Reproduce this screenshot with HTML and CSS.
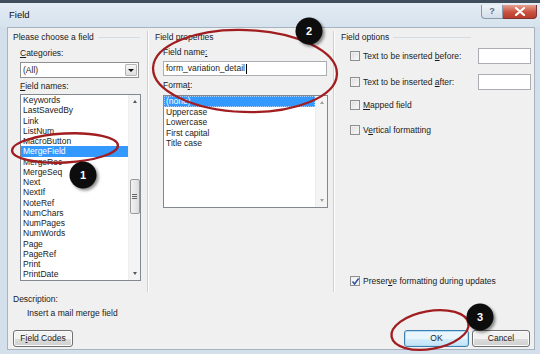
FILE: index.html
```html
<!DOCTYPE html>
<html lang="en">
<head>
  <meta charset="UTF-8" />
  <title>Field</title>
  <link rel="stylesheet" href="styles.css">
</head>
<body>

  <div class="strip"></div>

  <!-- Title bar -->
  <div class="titlebar">
    <span class="title">Field</span>
    <div class="caption-btns">
      <div class="help-btn">?</div>
      <div class="close-btn">
        <svg width="12" height="9" viewBox="0 0 12 9">
          <path d="M2 1 L10 8 M10 1 L2 8" stroke="#fff" stroke-width="2.2" stroke-linecap="round"/>
        </svg>
      </div>
    </div>
  </div>

  <!-- Dialog body -->
  <div class="client">
    <div class="panes">

      <!-- Left pane -->
      <div class="pane pane-left">
        <div class="group-title"><span>Please choose a field</span><i></i></div>
        <div class="group-body">
          <div class="label"><u>C</u>ategories:</div>
          <div class="combo">
            <span>(All)</span>
            <div class="combo-btn"><b></b></div>
          </div>
          <div class="label label-list"><u>F</u>ield names:</div>
          <div class="listbox names">
            <div class="items">
              <div>Keywords</div>
              <div>LastSavedBy</div>
              <div>Link</div>
              <div>ListNum</div>
              <div>MacroButton</div>
              <div class="sel">MergeField</div>
              <div>MergeRec</div>
              <div>MergeSeq</div>
              <div>Next</div>
              <div>NextIf</div>
              <div>NoteRef</div>
              <div>NumChars</div>
              <div>NumPages</div>
              <div>NumWords</div>
              <div>Page</div>
              <div>PageRef</div>
              <div>Print</div>
              <div>PrintDate</div>
            </div>
            <div class="vscroll">
              <span class="arrow up"></span>
              <span class="thumb"><em></em><em></em><em></em></span>
              <span class="arrow down"></span>
            </div>
          </div>
        </div>
      </div>

      <!-- Middle pane -->
      <div class="pane pane-mid">
        <div class="group-title"><span>Field properties</span></div>
        <div class="group-body">
          <div class="label">Field name<u>:</u></div>
          <div class="textbox">form_variation_detail<span class="caret"></span></div>
          <div class="label label-format">Forma<u>t</u>:</div>
          <div class="listbox formats">
            <div class="items">
              <div class="sel focus">(none)</div>
              <div>Uppercase</div>
              <div>Lowercase</div>
              <div>First capital</div>
              <div>Title case</div>
            </div>
            <div class="vscroll off">
              <span class="arrow up"></span>
              <span class="arrow down"></span>
            </div>
          </div>
        </div>
      </div>

      <!-- Right pane -->
      <div class="pane pane-right">
        <div class="group-title"><span>Field options</span><i></i></div>
        <div class="options">
          <div class="opt opt-first">
            <span class="check"></span>
            <span class="opt-text">Text to be inserted <u>b</u>efore:</span>
            <span class="small-input"></span>
          </div>
          <div class="opt opt-second">
            <span class="check"></span>
            <span class="opt-text">Text to be inserted <u>a</u>fter:</span>
            <span class="small-input"></span>
          </div>
          <div class="opt opt-third">
            <span class="check"></span>
            <span class="opt-text"><u>M</u>apped field</span>
          </div>
          <div class="opt opt-fourth">
            <span class="check"></span>
            <span class="opt-text">V<u>e</u>rtical formatting</span>
          </div>
          <div class="opt opt-last">
            <span class="check checked">
              <svg width="9" height="9" viewBox="0 0 9 9">
                <path d="M1.5 4.5 L3.6 7 L7.6 1.5" fill="none" stroke="#2a4f9a" stroke-width="1.4"/>
              </svg>
            </span>
            <span class="opt-text">Preser<u>v</u>e formatting during updates</span>
          </div>
        </div>
      </div>
    </div>

    <!-- Description + buttons -->
    <div class="desc">
      <div class="desc-label">Description:</div>
      <div class="desc-text">Insert a mail merge field</div>
    </div>
    <div class="btn-row">
      <div class="btn codes">F<u>i</u>eld Codes</div>
      <div class="btn ok">OK</div>
      <div class="btn cancel">Cancel</div>
    </div>
  </div>

  <!-- Annotation overlay -->
  <svg class="marks" width="540" height="354" viewBox="0 0 540 354">
    <defs>
      <filter id="shadow" x="-50%" y="-50%" width="200%" height="200%">
        <feDropShadow dx="2" dy="2" stdDeviation="1.6" flood-color="#000" flood-opacity="0.45"/>
      </filter>
    </defs>
    <ellipse cx="65" cy="148" rx="53" ry="14.5" transform="rotate(-3 65 148)" class="ring"/>
    <ellipse cx="245" cy="71" rx="92" ry="41" transform="rotate(2 245 71)" class="ring"/>
    <ellipse cx="430" cy="330" rx="39" ry="19" transform="rotate(-10 430 330)" class="ring"/>

    <g filter="url(#shadow)">
      <circle cx="83" cy="175" r="13.5" class="dot"/>
      <circle cx="309" cy="31" r="13.5" class="dot"/>
      <circle cx="480" cy="317" r="13.5" class="dot"/>
    </g>
    <text x="83" y="179" class="num">1</text>
    <text x="309" y="35" class="num">2</text>
    <text x="480" y="321" class="num">3</text>
  </svg>

</body>
</html>
```

FILE: styles.css
```css
body {
  margin: 0;
  width: 540px;
  height: 354px;
  overflow: hidden;
  position: relative;
  background: #d3dfea;
  font-family: 'Liberation Sans', Arial, sans-serif;
  font-size: 8.5px;
  color: #1b1b1b;
}

u {
  text-decoration: underline;
  text-underline-offset: 1px;
}

.strip {
  height: 3px;
  background: #3f4d5c;
}

/* title bar */
.titlebar {
  height: 24px;
  display: flex;
  justify-content: space-between;
  background: linear-gradient(#e4ecf4, #d6e2ed);
}

.title {
  padding-left: 9px;
  line-height: 24px;
  font-size: 9.5px;
  color: #111;
}

.caption-btns {
  display: flex;
  margin: 2px 3px 0 0;
  height: 14px;
}

.help-btn {
  width: 20px;
  height: 13px;
  border: 1px solid #8a9aac;
  border-top: none;
  border-radius: 0 0 0 4px;
  background: linear-gradient(#eef3f8, #d4dee9);
  color: #5a6a7c;
  font-size: 9px;
  font-weight: bold;
  text-align: center;
  line-height: 13px;
}

.close-btn {
  width: 33px;
  height: 13px;
  border: 1px solid #7a3232;
  border-top: none;
  border-left: none;
  border-radius: 0 0 4px 0;
  background: linear-gradient(#e8a090, #c9503f 55%, #b83b2c);
  display: flex;
  align-items: center;
  justify-content: center;
}

/* dialog body */
.client {
  margin: 0 5px 0 7px;
  height: 321px;
  border: 1px solid #a7b3bf;
  background: #f0f0f0;
}

.panes {
  display: grid;
  grid-template-columns: 140px 186px 1fr;
  margin-top: 3px;
  height: 261px;
}

.pane {
  box-sizing: border-box;
  display: flex;
  flex-direction: column;
}

.pane-left, .pane-mid {
  border-right: 1px solid #cfcfcf;
  box-shadow: 1px 0 0 #fff;
}

.pane-left { padding-left: 5px; }
.pane-mid { padding-left: 7px; }
.pane-right { padding-left: 7px; padding-right: 3px; }

.group-title {
  display: flex;
  align-items: center;
  line-height: 12px;
  height: 12px;
}

.group-title i {
  flex: 1;
  height: 1px;
  background: #d5dde4;
  margin: 1px 7px 0 4px;
}

.pane-right .group-title i {
  margin-right: 60px;
}

.group-body {
  display: flex;
  flex-direction: column;
  align-items: flex-start;
}

.pane-left .group-body { padding-left: 7px; }
.pane-mid .group-body { padding-left: 8px; }

.label {
  line-height: 12px;
  margin-top: 4px;
}

.pane-mid .label { margin-top: 3px; }

.label-list { margin-top: 2px; }
.pane-mid .label-format { margin-top: 3px; }

/* combo box */
.combo {
  margin-top: 3px;
  box-sizing: border-box;
  width: 119px;
  height: 16px;
  border: 1px solid #8e8f8f;
  background: #fff;
  display: flex;
  justify-content: space-between;
}

.combo span {
  padding-left: 2px;
  line-height: 14px;
}

.combo-btn {
  width: 10px;
  margin: 1px;
  border: 1px solid #b5b5b5;
  border-radius: 1px;
  background: linear-gradient(#f6f6f6, #dedede);
  display: flex;
  align-items: center;
  justify-content: center;
}

.combo-btn b {
  border-left: 3px solid transparent;
  border-right: 3px solid transparent;
  border-top: 3px solid #111;
}

/* list boxes */
.listbox {
  margin-top: 2px;
  box-sizing: border-box;
  border: 1px solid #828790;
  background: #fff;
  display: flex;
}

.names {
  width: 121px;
  height: 187px;
}

.formats {
  margin-top: 4px;
  width: 165px;
  height: 113px;
}

.items {
  flex: 1;
  padding-top: 0;
}

.items div {
  padding-left: 2px;
  line-height: 10.25px;
  white-space: nowrap;
}

.formats .items div {
  line-height: 10.5px;
}

.items .sel {
  background: #3399ff;
  color: #fff;
}

.items .focus {
  outline: 1px dotted #a8d0ff;
  outline-offset: -1px;
}

.vscroll {
  width: 11px;
  background: #f4f4f4;
  border-left: 1px solid #ededed;
  display: flex;
  flex-direction: column;
  align-items: center;
  position: relative;
}

.arrow {
  width: 0;
  height: 0;
  border-left: 2.5px solid transparent;
  border-right: 2.5px solid transparent;
}

.arrow.up {
  margin-top: 5px;
  border-bottom: 3px solid #555;
}

.arrow.down {
  margin-top: auto;
  margin-bottom: 5px;
  border-top: 3px solid #555;
}

.vscroll.off .arrow.up { border-bottom-color: #a0a0a0; }
.vscroll.off .arrow.down { border-top-color: #a0a0a0; }

.thumb {
  margin-top: 76px;
  box-sizing: border-box;
  width: 10px;
  height: 35px;
  border: 1px solid #9a9a9a;
  border-radius: 2px;
  background: linear-gradient(90deg, #f3f3f3, #dcdcdc);
  display: flex;
  flex-direction: column;
  align-items: center;
  justify-content: center;
  gap: 1px;
}

.thumb em {
  width: 5px;
  height: 1px;
  background: #666;
}

/* text box */
.textbox {
  margin-top: 3px;
  box-sizing: border-box;
  width: 164px;
  height: 15px;
  border: 1px solid #abadb3;
  background: #fff;
  padding-left: 2px;
  line-height: 13px;
  display: flex;
  align-items: center;
}

.caret {
  width: 1px;
  height: 10px;
  margin-left: 1px;
  background: #000;
}

/* right pane options */
.options {
  flex: 1;
  display: flex;
  flex-direction: column;
  padding-left: 9px;
}

.opt {
  height: 16px;
  display: flex;
  align-items: center;
}

.opt-first { margin-top: 5px; }
.opt-second { margin-top: 10px; }
.opt-third { margin-top: 7px; }
.opt-fourth { margin-top: 9px; }
.opt-last { margin-top: auto; margin-bottom: 3px; }

.check {
  box-sizing: border-box;
  width: 10px;
  height: 10px;
  border: 1px solid #8e8f8f;
  background: linear-gradient(135deg, #dcdcdc, #fbfbfb);
  box-shadow: inset 0 0 0 1px #f0f0f0;
  display: flex;
  align-items: center;
  justify-content: center;
}

.check.checked {
  background: #f4f4f4;
}

.check svg {
  margin: -1px;
}

.opt-text {
  margin-left: 3px;
}

.small-input {
  margin-left: auto;
  box-sizing: border-box;
  width: 53px;
  height: 16px;
  border: 1px solid #abadb3;
  background: #fff;
}

/* description */
.desc {
  padding-top: 1px;
}

.desc-label {
  padding-left: 5px;
  line-height: 12px;
}

.desc-text {
  padding-left: 19px;
  margin-top: 2px;
  line-height: 12px;
}

/* buttons */
.btn-row {
  display: flex;
  margin-top: 11px;
  padding: 0 4px 0 5px;
  gap: 3px;
}

.btn {
  box-sizing: border-box;
  height: 17px;
  border: 1px solid #707070;
  border-radius: 3px;
  background: linear-gradient(#f2f2f2 50%, #dddddd 50%, #cfcfcf);
  box-shadow: inset 0 0 0 1px #fbfbfb;
  text-align: center;
  line-height: 15px;
}

.codes { width: 60px; }

.ok {
  width: 65px;
  margin-left: auto;
  border-color: #3c7fb1;
  box-shadow: inset 0 0 0 1px #b6dcf3;
  background: linear-gradient(#eaf6fd 50%, #d6eefb 50%, #c2e4f8);
}

.cancel { width: 58px; }

/* annotations */
.marks {
  position: absolute;
  left: 0;
  top: 0;
  pointer-events: none;
}

.ring {
  fill: none;
  stroke: #a11d20;
  stroke-width: 2.3;
}

.dot {
  fill: #0b0b0b;
}

.num {
  fill: #fff;
  font-family: 'Liberation Sans', Arial, sans-serif;
  font-size: 11px;
  font-weight: bold;
  text-anchor: middle;
}
```
